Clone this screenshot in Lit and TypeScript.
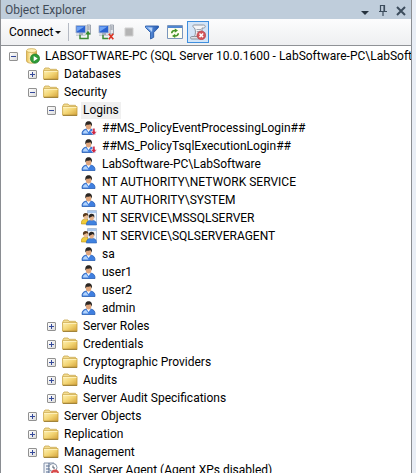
import { LitElement, html, svg, css, nothing } from "lit";
import { customElement, property, state } from "lit/decorators.js";

type Kind = "server" | "folder" | "user" | "userDown" | "group" | "agent";

interface TreeNode {
  label: string;
  kind: Kind;
  open?: boolean;
  branch?: boolean;
  selected?: boolean;
  children?: TreeNode[];
}

const folder = (label: string, children?: TreeNode[]): TreeNode => ({
  label,
  kind: "folder",
  branch: true,
  open: !!children,
  children,
});
const leaf = (label: string, kind: Kind = "user"): TreeNode => ({ label, kind });

const logins = folder("Logins", [
  leaf("##MS_PolicyEventProcessingLogin##", "userDown"),
  leaf("##MS_PolicyTsqlExecutionLogin##", "userDown"),
  leaf("LabSoftware-PC\\LabSoftware"),
  leaf("NT AUTHORITY\\NETWORK SERVICE"),
  leaf("NT AUTHORITY\\SYSTEM"),
  leaf("NT SERVICE\\MSSQLSERVER", "group"),
  leaf("NT SERVICE\\SQLSERVERAGENT", "group"),
  leaf("sa"),
  leaf("user1"),
  leaf("user2"),
  leaf("admin"),
]);
logins.selected = true;

const root: TreeNode = {
  label: "LABSOFTWARE-PC (SQL Server 10.0.1600 - LabSoftware-PC\\LabSoftware)",
  kind: "server",
  branch: true,
  open: true,
  children: [
    folder("Databases"),
    folder("Security", [
      logins,
      folder("Server Roles"),
      folder("Credentials"),
      folder("Cryptographic Providers"),
      folder("Audits"),
      folder("Server Audit Specifications"),
    ]),
    folder("Server Objects"),
    folder("Replication"),
    folder("Management"),
    leaf("SQL Server Agent (Agent XPs disabled)", "agent"),
  ],
};

const person = svg`
  <path d="M1 14.500C.8 11 2.500 9.400 5.500 9h4c3 .4 4.700 2 4.500 5.500z" fill="#3f7fe0" stroke="#2a5fb4" stroke-width=".8"/>
  <path d="M2 13.500c0-2 1-3.300 3-3.600l2.500 3.600z" fill="#b4d4fa"/>
  <path d="M5.600 9l2 3 2-3z" fill="#fff"/>
  <ellipse cx="7.600" cy="6.300" rx="2.700" ry="3.200" fill="#dfa57c"/>
  <path d="M4.400 6.500C3.800 3 5.300 1.300 7.600 1.300s3.900 1.600 3.300 5.200C10.400 5.500 10 4.700 9.500 4.300 8 4.900 6.500 4.500 5.500 4.700z" fill="#2b2622"/>`;

const pcs = svg`
  <path d="M12 1h3.500v9H12z" fill="#e4e7ec" stroke="#8b93a0" stroke-width=".8"/>
  <path d="M12.700 3h2M12.700 5h2" stroke="#68717f" stroke-width=".8"/>
  <path d="M1 1.500h9.500v7.500H1z" fill="#2a62d0" stroke="#aebbd0"/>
  <path d="M2 2.500h7.500L2 7.500z" fill="#6fa3f4"/>
  <path d="M4 9.500h4v1.500H4z" fill="#7d8794"/>
  <path d="M1 11.200h9.500" stroke="#c7cdd6" stroke-width="1.500"/>`;

const glyphs = {
  folder: svg`
    <path d="M1 3.300l1-1.300h4l1 1.300h6.500v3H1z" fill="#f3dc90" stroke="#c9a850" stroke-width=".8"/>
    <path d="M.6 4.500h14.400v8.700H.6z" fill="url(#fold)" stroke="#c79f3c" stroke-width=".8"/>
    <path d="M1 5.300h13.500" stroke="#fff4c4"/>
    <path d="M1 13.400h14.200" stroke="#94742a" stroke-width=".9"/>`,
  server: svg`
    <path d="M2.500 3v9.800c0 3.200 10 3.200 10 0V3z" fill="url(#drum)" stroke="#c09a3c" stroke-width=".7"/>
    <ellipse cx="7.500" cy="2.600" rx="5" ry="2" fill="#fff0b4" stroke="#c9a64d" stroke-width=".7"/>
    <circle cx="11" cy="10.600" r="4.600" fill="#2d9b36" stroke="#1f7a2a" stroke-width=".7"/>
    <path d="M9.700 7.900v5.400l4-2.700z" fill="#fff"/>`,
  user: person,
  userDown: svg`${person}
    <path d="M11.700 8.200h2.300v3.300h1.900L12.850 15.300 9.800 11.500h1.900z" fill="#cf2440" stroke="#fff" stroke-width=".6"/>`,
  group: svg`
    <path d="M6.500.5h9v12h-9z" fill="#edf3fb" stroke="#9fb5d2" stroke-width=".8"/>
    <path d="M7 1h8v2H7z" fill="#aac8ed"/>
    <path d="M.4 14c-.3-3.500 1-4.500 3-4.800h3L8 14z" fill="#f0cc3a" stroke="#b98d13" stroke-width=".6"/>
    <ellipse cx="4.700" cy="6.800" rx="2.300" ry="2.700" fill="#e8bc93"/>
    <path d="M2 7c-.5-3 .9-4 2.700-4s3 1 2.700 3.500L6 5z" fill="#5b3b1d"/>
    <path d="M5.300 15c0-3 1.500-4.200 3.500-4.500h3.500c2 .4 3.300 1.500 3.300 4.500z" fill="#3f82e0" stroke="#2a5fb4" stroke-width=".6"/>
    <ellipse cx="10.600" cy="7.800" rx="2.300" ry="2.800" fill="#e3ae86"/>
    <path d="M7.900 8c-.5-3.200 1-4.200 2.700-4.200s3.200 1 2.700 3.900L12 6z" fill="#2b2622"/>`,
  agent: svg`
    <path d="M1 1h10v13H1z" fill="#f0f3f8" stroke="#8391a8"/>
    <path d="M3 4h4M3 7h3M3 10h3M6 1v12" stroke="#53698d"/>
    <circle cx="10" cy="5.500" r="4" fill="#fff" stroke="#8795a8"/>
    <path d="M10 3.500v2.500h2" fill="none" stroke="#4a5668"/>
    <circle cx="12" cy="11.500" r="4" fill="#d84a4a"/>
    <path d="M10.500 10l3 3m0-3l-3 3" stroke="#fff"/>`,
  connect: svg`${pcs}
    <path d="M5 11v3.500h8V10" fill="none" stroke="#3c8b35" stroke-width="1.500"/>
    <path d="M10.200 10.500L13 6.800l2.800 3.700z" fill="#348b2b"/>`,
  disconnect: svg`${pcs}
    <path d="M5 11v3.500h5" fill="none" stroke="#3c8b35" stroke-width="1.500"/>
    <path d="M10.800 9.800l4.500 5.400m0-5.400l-4.500 5.400" stroke="#dc3424" stroke-width="1.700"/>`,
  stop: svg`<path d="M4 4h8v8H4z" fill="#b4b4b4" stroke="#cfcfcf"/>`,
  filter: svg`
    <path d="M1.500 2h13v1.500L9.700 8.500v4.800L6.500 15V8.500L1.500 3.500z" fill="url(#fun)" stroke="#2c5ca8" stroke-width=".9"/>
    <path d="M3.500 3.500h5L8 8z" fill="#b9d5fa"/>`,
  refresh: svg`
    <path d="M.5 1.500h15v13H.5z" fill="#fffef0" stroke="#7a96bd"/>
    <path d="M1 2h14v2H1z" fill="#4f86d0"/>
    <path d="M4.700 9.200c0-1.700 1-2.700 3.500-2.700" fill="none" stroke="#45952a" stroke-width="1.500"/>
    <path d="M7.800 4.400L11 6.500 7.800 8.700z" fill="#45952a"/>
    <path d="M11.300 9.300c0 1.700-1 2.600-3.500 2.600" fill="none" stroke="#45952a" stroke-width="1.500"/>
    <path d="M8.200 9.700L5 11.900l3.200 2.100z" fill="#45952a"/>`,
  script: svg`
    <path d="M3.500 1h10c2.300 0 2.300 3 0 3H12v8.500H4.500c1.300-3 1.300-6 0-8.500C2.800 3.500 2.500 1.700 3.500 1z" fill="#f4f5f7" stroke="#858b94" stroke-width=".9"/>
    <path d="M6.500 5.500H11M6.800 7.500H11" stroke="#a3a9b3"/>
    <path d="M4.500 12.500H1.700c-1.700 0-1.500 2.500 0 2.500H9v-2.500z" fill="#dfe2e6" stroke="#858b94" stroke-width=".9"/>
    <circle cx="11.300" cy="11.300" r="4.400" fill="#d2555a" stroke="#b2414a" stroke-width=".6"/>
    <path d="M9.500 9.500l3.600 3.600m0-3.600l-3.600 3.600" stroke="#fff" stroke-width="1.500"/>`,
  menu: svg`<path d="M4 9h8L8 13z" fill="#26323e"/>`,
  pin: svg`<path d="M5.500 9V3.500h4V9M9 3.500V9M4 9.500h8M8 10v4" fill="none" stroke="#3c4c5c" stroke-width="1.200"/>`,
  close: svg`<path d="M4 5l8 8m0-8l-8 8" stroke="#3c4c5c" stroke-width="2"/>`,
};

@customElement("oe-icon")
export class OeIcon extends LitElement {
  @property() name: keyof typeof glyphs = "folder";

  static styles = css`
    :host {
      display: block;
      flex: none;
      width: 16px;
      height: 16px;
    }
    .glyph {
      display: block;
    }
  `;

  render() {
    return html`<svg class="glyph" width="16" height="16" viewBox="0 0 16 16" aria-hidden="true">
      <defs>
        <linearGradient id="fold" x1="0" y1="0" x2="1" y2="1">
          <stop offset="0" stop-color="#fff3b8" />
          <stop offset=".5" stop-color="#f3d574" />
          <stop offset="1" stop-color="#d3a23a" />
        </linearGradient>
        <linearGradient id="drum">
          <stop offset="0" stop-color="#e7bc4e" />
          <stop offset=".4" stop-color="#fff2b5" />
          <stop offset="1" stop-color="#dba936" />
        </linearGradient>
        <linearGradient id="fun">
          <stop offset="0" stop-color="#75a9ef" />
          <stop offset="1" stop-color="#2459b0" />
        </linearGradient>
      </defs>
      ${glyphs[this.name]}
    </svg>`;
  }
}

@customElement("app-root")
export class AppRoot extends LitElement {
  @state() private tree = root;

  static styles = css`
    :host {
      display: block;
      height: 100vh;
      overflow: hidden;
      background: #e9eef6;
      color: #000;
      font: 12px/18px Roboto, "Open Sans", sans-serif;
    }
    button {
      margin: 0;
      padding: 0;
      border: 0;
      background: none;
      color: inherit;
      font: inherit;
    }
    .panel {
      box-sizing: border-box;
      display: flex;
      flex-direction: column;
      height: 100%;
      margin-right: 4px;
      border: solid #8a8d92;
      border-width: 0 1px;
      background: #fff;
    }
    .title {
      display: flex;
      align-items: center;
      gap: 2px;
      height: 19px;
      padding: 0 2px 0 4px;
      background: #bfcddb;
      color: #3f4b58;
    }
    .name {
      flex: 1;
      margin: 0;
      font: inherit;
    }
    .toolbar {
      display: flex;
      align-items: center;
      gap: 1px;
      height: 26px;
      padding-left: 8px;
      border-bottom: 1px solid #8f9296;
      background: linear-gradient(#fcfcfd, #eeeff1);
    }
    .connect {
      display: flex;
      align-items: center;
      justify-content: space-between;
      width: 52px;
    }
    .caret {
      border: solid transparent;
      border-width: 3px 3px 0;
      border-top-color: #111;
    }
    .rule {
      width: 1px;
      height: 18px;
      margin: 0 2px 0 6px;
      background: #b5bac4;
    }
    .tool {
      padding: 2px;
      border: 1px solid transparent;
    }
    .tool[aria-pressed="true"] {
      border-color: #3f8fde;
      background: #d3e5f8;
    }
    .tree,
    .group {
      margin: 0;
      padding: 0;
      list-style: none;
    }
    .tree {
      flex: 1;
      min-height: 0;
      padding: 1px 0 0 8px;
      overflow: hidden;
    }
    .group {
      padding-left: 19px;
    }
    .row {
      display: flex;
      align-items: center;
      height: 18px;
      white-space: nowrap;
    }
    .twist,
    .blank {
      flex: none;
      width: 9px;
      height: 9px;
      margin-right: 6px;
    }
    .twist {
      display: grid;
      place-items: center;
      box-sizing: border-box;
      border: 1px solid #919191;
      border-radius: 1px;
      background: linear-gradient(135deg, #fff, #dcdcdc);
    }
    .sign {
      display: block;
    }
    .label {
      margin-left: 3px;
      padding: 0 2px;
      line-height: 17px;
    }
    .selected {
      background: #f0f0f0;
    }
  `;

  private toggle(node: TreeNode) {
    node.open = !node.open;
    this.tree = { ...this.tree, open: node === this.tree ? node.open : this.tree.open };
  }

  private tool(name: keyof typeof glyphs, label: string, pressed = false) {
    return html`<button class="tool" aria-label=${label} aria-pressed=${pressed ? "true" : nothing}>
      <oe-icon name=${name}></oe-icon>
    </button>`;
  }

  private node(n: TreeNode): unknown {
    return html`<li role="treeitem" aria-expanded=${n.branch ? String(!!n.open) : nothing}>
      <div class="row">
        ${n.branch
          ? html`<button class="twist" aria-label="Toggle ${n.label}" @click=${() => this.toggle(n)}>
              <svg class="sign" width="7" height="7" viewBox="0 0 7 7">
                <path d=${n.open ? "M1 3.500h5" : "M1 3.500h5M3.500 1v5"} stroke="#34499a" />
              </svg>
            </button>`
          : html`<span class="blank"></span>`}
        <oe-icon name=${n.kind}></oe-icon>
        <span class="label ${n.selected ? "selected" : ""}">${n.label}</span>
      </div>
      ${n.open && n.children
        ? html`<ul class="group" role="group">${n.children.map((c) => this.node(c))}</ul>`
        : nothing}
    </li>`;
  }

  render() {
    return html`<section class="panel">
      <header class="title">
        <h1 class="name">Object Explorer</h1>
        <button aria-label="Window position"><oe-icon name="menu"></oe-icon></button>
        <button aria-label="Auto hide"><oe-icon name="pin"></oe-icon></button>
        <button aria-label="Close"><oe-icon name="close"></oe-icon></button>
      </header>
      <div class="toolbar" role="toolbar">
        <button class="connect">Connect<span class="caret"></span></button>
        <span class="rule"></span>
        ${this.tool("connect", "Connect Object Explorer")}
        ${this.tool("disconnect", "Disconnect")}
        ${this.tool("stop", "Stop")}
        ${this.tool("filter", "Filter")}
        ${this.tool("refresh", "Refresh")}
        ${this.tool("script", "Script errors", true)}
      </div>
      <ul class="tree" role="tree">${this.node(this.tree)}</ul>
    </section>`;
  }
}
